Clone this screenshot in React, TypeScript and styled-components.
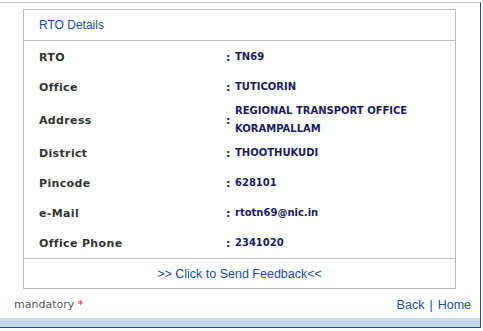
import React from "react";
import styled, { createGlobalStyle } from "styled-components";

const GlobalStyle = createGlobalStyle`
  html, body { margin: 0; padding: 0; background: #ffffff; }
  * { box-sizing: border-box; }
`;

const Page = styled.div`
  width: 481px;
  padding-top: 2px;
`;

const Frame = styled.div`
  border-top: 1px solid #c9c9c9;
  border-right: 1px solid #2c4d84;
  border-bottom: 1px solid #2c4d84;
  display: flex;
  flex-direction: column;
`;

const Card = styled.div`
  margin: 6px 24px 0 23px;
  border: 1px solid #bdbdbd;
  display: flex;
  flex-direction: column;
`;

const CardHeader = styled.div`
  height: 31px;
  border-bottom: 1px solid #c4c4c4;
  display: flex;
  align-items: center;
  padding-left: 15px;
  font-family: "Liberation Sans", Arial, sans-serif;
  font-size: 12px;
  color: #1c4c9e;
`;

const Rows = styled.div`
  display: flex;
  flex-direction: column;
  padding-top: 1px;
`;

const Row = styled.div<{ $tall?: boolean }>`
  display: grid;
  grid-template-columns: 187px 9px 1fr;
  align-items: center;
  height: ${(p) => (p.$tall ? 36 : 30)}px;
  padding-left: 15px;
`;

const Label = styled.div`
  font-family: "DejaVu Sans", Verdana, sans-serif;
  font-weight: bold;
  font-size: 11px;
  letter-spacing: 0.35px;
  color: #333333;
`;

const Colon = styled.div`
  font-family: "DejaVu Sans", Verdana, sans-serif;
  font-weight: bold;
  font-size: 11px;
  color: #1a1a5a;
`;

const Value = styled.div`
  font-family: "DejaVu Sans", Verdana, sans-serif;
  font-weight: bold;
  font-size: 10px;
  line-height: 18px;
  color: #1b1b5e;
`;

const FeedbackRow = styled.div`
  height: 30px;
  border-top: 1px solid #c4c4c4;
  display: flex;
  align-items: center;
  justify-content: center;
`;

const BlueLink = styled.a`
  font-family: "Liberation Sans", Arial, sans-serif;
  font-size: 12.5px;
  color: #1c4c9e;
  text-decoration: none;
  cursor: pointer;
`;

const Footer = styled.div`
  height: 29px;
  display: flex;
  align-items: center;
  justify-content: space-between;
  padding: 2px 9px 0 14px;
`;

const Mandatory = styled.span`
  font-family: "DejaVu Sans", Verdana, sans-serif;
  font-size: 11px;
  color: #555555;
`;

const Star = styled.span`
  color: #d0202a;
`;

const Nav = styled.div`
  display: flex;
  align-items: center;
  gap: 5px;
  font-family: "Liberation Sans", Arial, sans-serif;
  font-size: 12.5px;
  color: #1c4c9e;
`;

const Band = styled.div`
  height: 9px;
  background: #c6d9f1;
`;

const rows: { label: string; value: React.ReactNode; tall?: boolean }[] = [
  { label: "RTO", value: "TN69" },
  { label: "Office", value: "TUTICORIN" },
  {
    label: "Address",
    value: (
      <>
        REGIONAL TRANSPORT OFFICE
        <br />
        KORAMPALLAM
      </>
    ),
    tall: true,
  },
  { label: "District", value: "THOOTHUKUDI" },
  { label: "Pincode", value: "628101" },
  { label: "e-Mail", value: "rtotn69@nic.in" },
  { label: "Office Phone", value: "2341020" },
];

export default function App() {
  return (
    <>
      <GlobalStyle />
      <Page>
        <Frame>
          <Card>
            <CardHeader>RTO Details</CardHeader>
            <Rows>
              {rows.map((r) => (
                <Row key={r.label} $tall={r.tall}>
                  <Label>{r.label}</Label>
                  <Colon>:</Colon>
                  <Value>{r.value}</Value>
                </Row>
              ))}
            </Rows>
            <FeedbackRow>
              <BlueLink>&gt;&gt; Click to Send Feedback&lt;&lt;</BlueLink>
            </FeedbackRow>
          </Card>
          <Footer>
            <Mandatory>
              mandatory <Star>*</Star>
            </Mandatory>
            <Nav>
              <BlueLink>Back</BlueLink>
              <span>|</span>
              <BlueLink>Home</BlueLink>
            </Nav>
          </Footer>
          <Band />
        </Frame>
      </Page>
    </>
  );
}
